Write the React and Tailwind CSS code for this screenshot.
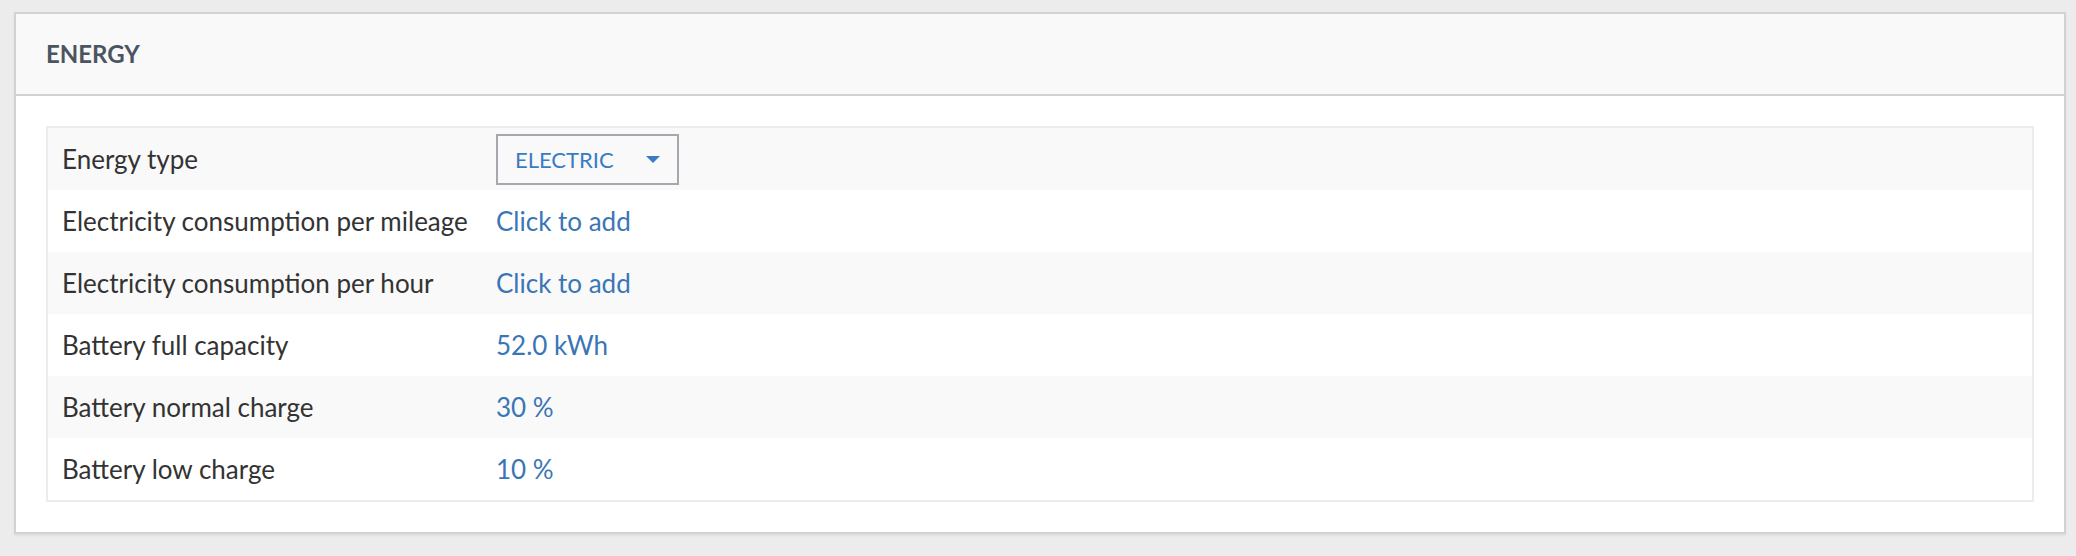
const rows = [
  { label: "Energy type", select: "ELECTRIC" },
  { label: "Electricity consumption per mileage", value: "Click to add" },
  { label: "Electricity consumption per hour", value: "Click to add" },
  { label: "Battery full capacity", value: "52.0 kWh" },
  { label: "Battery normal charge", value: "30 %" },
  { label: "Battery low charge", value: "10 %" },
];

function EnergySelect({ value }) {
  return (
    <button className="flex items-center justify-between w-[183px] h-[51px] border-2 border-[#a5a8ae] bg-[#f9f9f9] pl-[17px] pr-[17px] text-[22px] text-[#3a7bc4]">
      <span>{value}</span>
      <svg width="14" height="7" viewBox="0 0 14 7" className="fill-[#3a7bc4]">
        <path d="M0 0h14L7 7z" />
      </svg>
    </button>
  );
}

export default function App() {
  return (
    <div className="min-h-[556px] bg-[#ececec] pt-[12px] pb-[22px] font-['Lato','Liberation_Sans',sans-serif]">
      <div className="ml-[14px] w-[2052px] border-2 border-[#d2d2d6] bg-white shadow-[0_2px_2px_rgba(0,0,0,0.06)]">
        <div className="h-[82px] flex items-center bg-[#f9f9f9] border-b-2 border-[#d2d2d6] pl-[30px]">
          <h2 className="text-[24px] font-bold text-[#4b5561]">ENERGY</h2>
        </div>
        <div className="p-[30px]">
          <div className="border-2 border-[#ececec]">
            {rows.map((r, i) => (
              <div
                key={r.label}
                className={`grid grid-cols-[448px_1fr] items-center h-[62px] text-[26px] ${i % 2 === 0 ? "bg-[#f9f9f9]" : "bg-white"}`}
              >
                <div className="pl-[14px] text-[#333333]">{r.label}</div>
                <div>
                  {r.select ? (
                    <EnergySelect value={r.select} />
                  ) : (
                    <a className="text-[#3a75b6] cursor-pointer">{r.value}</a>
                  )}
                </div>
              </div>
            ))}
          </div>
        </div>
      </div>
    </div>
  );
}
